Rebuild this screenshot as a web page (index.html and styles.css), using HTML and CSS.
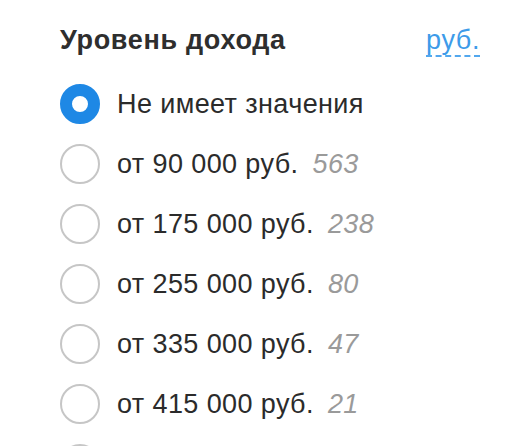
FILE: index.html
```html
<!DOCTYPE html>
<html lang="ru">
<head>
<meta charset="utf-8">
<title>Уровень дохода</title>
<link rel="stylesheet" href="styles.css">
</head>
<body>
<section class="filter">
  <div class="filter-head">
    <h2 class="filter-title">Уровень дохода</h2>
    <a class="currency" href="#">руб.</a>
  </div>
  <ul class="options">
    <li class="option"><span class="radio radio-checked"></span><span class="label">Не имеет значения</span></li>
    <li class="option"><span class="radio"></span><span class="label">от 90 000 руб.</span><span class="count">563</span></li>
    <li class="option"><span class="radio"></span><span class="label">от 175 000 руб.</span><span class="count">238</span></li>
    <li class="option"><span class="radio"></span><span class="label">от 255 000 руб.</span><span class="count">80</span></li>
    <li class="option"><span class="radio"></span><span class="label">от 335 000 руб.</span><span class="count">47</span></li>
    <li class="option"><span class="radio"></span><span class="label">от 415 000 руб.</span><span class="count">21</span></li>
    <li class="option"><span class="radio"></span><span class="label">Указан доход</span><span class="count">1046</span></li>
  </ul>
</section>
</body>
</html>
```

FILE: styles.css
```css
html, body {
  margin: 0;
  padding: 0;
  background: #ffffff;
  overflow: hidden;
  height: 100%;
}

body {
  font-family: "Liberation Sans", Arial, sans-serif;
  color: #333333;
}

.filter {
  width: 420px;
  padding: 25px 0 0 60px;
}

.filter-head {
  display: flex;
  justify-content: space-between;
  align-items: baseline;
  height: 30px;
}

.filter-title {
  margin: 0;
  font-size: 27px;
  line-height: 30px;
  font-weight: bold;
  letter-spacing: 0.7px;
  color: #2e2e2e;
}

.currency {
  font-size: 27px;
  line-height: 30px;
  letter-spacing: 0.6px;
  color: #3d9be9;
  text-decoration: none;
  border-bottom: 2px dashed #52a7ee;
}

.options {
  list-style: none;
  margin: 29px 0 0 0;
  padding: 0;
  display: flex;
  flex-direction: column;
  gap: 20px;
}

.option {
  display: flex;
  align-items: center;
  height: 40px;
  font-size: 27px;
  letter-spacing: 0.4px;
}

.radio {
  box-sizing: border-box;
  width: 40px;
  height: 40px;
  border-radius: 50%;
  border: 2px solid #c6c6c6;
  flex: none;
  margin-right: 17px;
}

.radio-checked {
  border: 12px solid #1e88e5;
  background: #ffffff;
}

.label {
  color: #2b2b2b;
}

.count {
  margin-left: 14px;
  font-style: italic;
  color: #9a9a9a;
}
```
